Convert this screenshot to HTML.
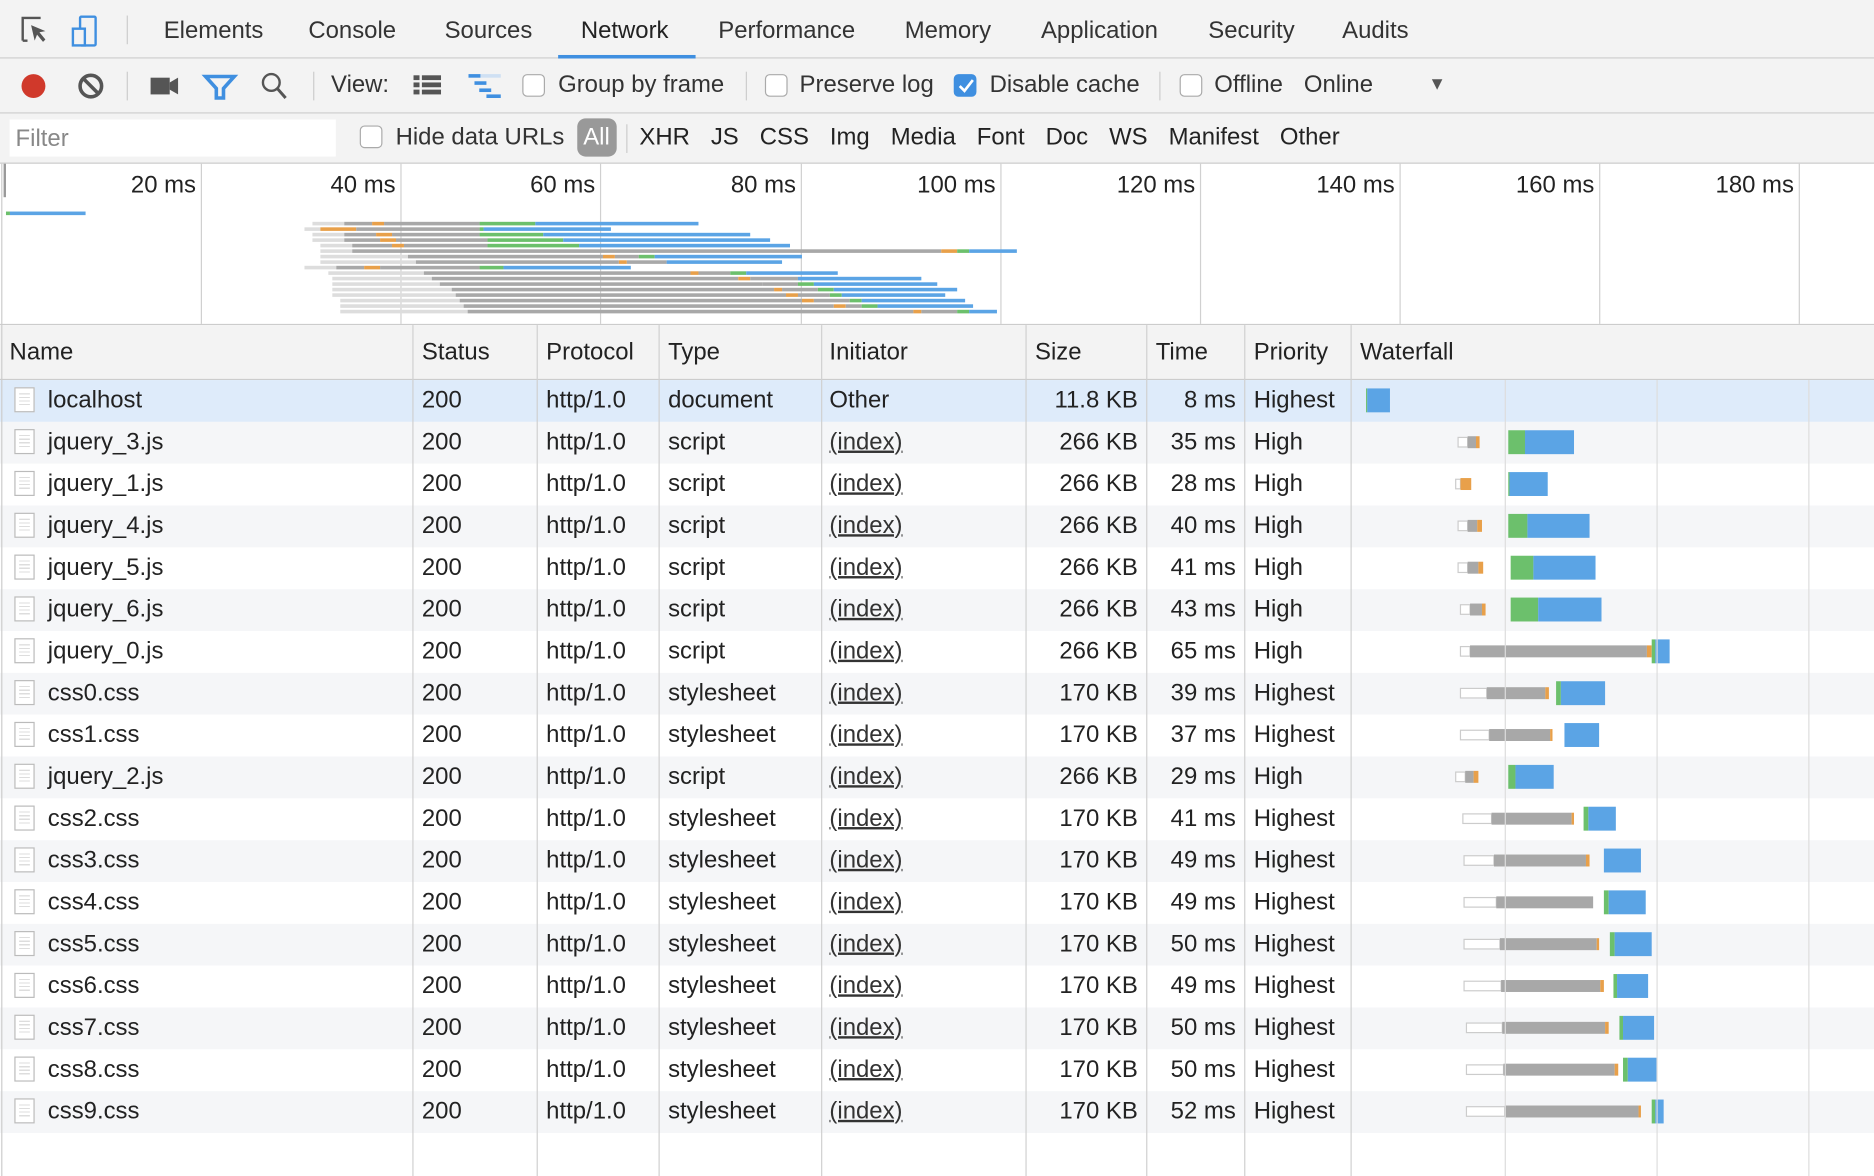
<!DOCTYPE html>
<html><head><meta charset="utf-8"><style>
html,body{margin:0;padding:0;background:#fff;overflow:hidden;width:1874px;height:1176px}
#w{position:absolute;left:0;top:0;width:1568px;height:984px;transform:scale(1.19515);transform-origin:0 0;font-family:"Liberation Sans",Arial,sans-serif;font-size:20px;color:#222}
.a{position:absolute;white-space:nowrap}
.bar{position:absolute;left:0;width:1568px}
.t{top:15px;color:#333}
.cb{position:absolute;width:17px;height:17px;border:1px solid #aaa;border-radius:4px;background:#fff}
.vl{position:absolute;width:1px;background:#d0d0d0}
.row{position:absolute;left:0;width:1568px;height:35px}
.row span{position:absolute;top:6px;white-space:nowrap}
.r{text-align:right}
.u{text-decoration:underline;color:#333}
.ic{position:absolute;left:12px;top:6px;width:17px;height:21px;border:1px solid #bbb;background:#fff;box-sizing:border-box}
.ic:after{content:"";position:absolute;left:3px;right:3px;top:4px;height:11px;background:repeating-linear-gradient(#ddd 0 1px,transparent 1px 3px)}
</style></head><body><div id="w">
<!-- tab bar -->
<div class="bar" style="top:0;height:48px;background:#f3f3f3;border-bottom:1px solid #ccc"></div>
<svg class="a" style="left:16px;top:12px" width="80" height="30">
<path d="M3 22V3h15M3 22h4" fill="none" stroke="#555" stroke-width="2"/>
<path d="M10 9l12 5-5 1 5 6-2 2-5-6-2 5z" fill="#555"/>
<rect x="51" y="2" width="13" height="24" rx="1" fill="none" stroke="#3f8fe0" stroke-width="2"/>
<rect x="45" y="12" width="10" height="14" fill="#f3f3f3" stroke="#3f8fe0" stroke-width="2"/>
</svg>
<div class="a" style="left:106px;top:13px;width:1px;height:24px;background:#ccc"></div>
<div class="a t" style="left:137px">Elements</div>
<div class="a t" style="left:258px">Console</div>
<div class="a t" style="left:372px">Sources</div>
<div class="a t" style="left:486px;color:#222">Network</div>
<div class="a" style="left:467px;top:46px;width:115px;height:3px;background:#3f8fe0"></div>
<div class="a t" style="left:601px">Performance</div>
<div class="a t" style="left:757px">Memory</div>
<div class="a t" style="left:871px">Application</div>
<div class="a t" style="left:1011px">Security</div>
<div class="a t" style="left:1123px">Audits</div>
<!-- toolbar -->
<div class="bar" style="top:49px;height:45px;background:#f3f3f3;border-bottom:1px solid #ccc"></div>
<svg class="a" style="left:14px;top:58px" width="240" height="28">
<circle cx="14" cy="14" r="10" fill="#d0392b"/>
<circle cx="62" cy="14" r="9" fill="none" stroke="#555" stroke-width="3"/><path d="M56 8l12 12" stroke="#555" stroke-width="3"/>
<rect x="112" y="7" width="16" height="14" fill="#555"/><path d="M128 11l7-4v14l-7-4z" fill="#555"/>
<path d="M158 6h24l-9 10v8h-6v-8z" fill="none" stroke="#3f8fe0" stroke-width="3"/>
<circle cx="213" cy="11" r="7" fill="none" stroke="#555" stroke-width="2"/><path d="M218 16l7 8" stroke="#555" stroke-width="2.5"/>
</svg>
<div class="a" style="left:106px;top:60px;width:1px;height:24px;background:#ccc"></div>
<div class="a" style="left:262px;top:60px;width:1px;height:24px;background:#ccc"></div>
<div class="a t" style="left:277px;top:60px">View:</div>
<svg class="a" style="left:345px;top:60px" width="80" height="24">
<rect x="1" y="3" width="5" height="4" fill="#555"/><rect x="8" y="3" width="16" height="4" fill="#555"/>
<rect x="1" y="9" width="5" height="4" fill="#555"/><rect x="8" y="9" width="16" height="4" fill="#555"/>
<rect x="1" y="15" width="5" height="4" fill="#555"/><rect x="8" y="15" width="16" height="4" fill="#555"/>
<rect x="47" y="2" width="10" height="3" fill="#3f8fe0"/><rect x="57" y="2" width="17" height="3" fill="#cfe0f3"/>
<rect x="52" y="8" width="10" height="3" fill="#3f8fe0"/><rect x="56" y="14" width="10" height="3" fill="#3f8fe0"/><rect x="62" y="19" width="12" height="3" fill="#3f8fe0"/>
</svg>
<div class="cb" style="left:437px;top:62px"></div>
<div class="a t" style="left:467px;top:60px">Group by frame</div>
<div class="a" style="left:624px;top:60px;width:1px;height:24px;background:#ccc"></div>
<div class="cb" style="left:640px;top:62px"></div>
<div class="a t" style="left:669px;top:60px">Preserve log</div>
<div class="cb" style="left:798px;top:62px;background:#3f8fe0;border-color:#3f8fe0"></div>
<svg class="a" style="left:800px;top:64px" width="16" height="16"><path d="M3 8l4 4 7-9" fill="none" stroke="#fff" stroke-width="2.2"/></svg>
<div class="a t" style="left:828px;top:60px">Disable cache</div>
<div class="a" style="left:970px;top:60px;width:1px;height:24px;background:#ccc"></div>
<div class="cb" style="left:987px;top:62px"></div>
<div class="a t" style="left:1016px;top:60px">Offline</div>
<div class="a t" style="left:1091px;top:60px">Online</div>
<div class="a" style="left:1195px;top:62px;font-size:15px;color:#555">▼</div>
<!-- filter -->
<div class="bar" style="top:95px;height:41px;background:#f3f3f3;border-bottom:1px solid #ccc"></div>
<div class="a" style="left:8px;top:100px;width:273px;height:31px;background:#fff"></div>
<div class="a" style="left:13px;top:105px;color:#888">Filter</div>
<div class="cb" style="left:301px;top:105px"></div>
<div class="a t" style="left:331px;top:104px">Hide data URLs</div>
<div class="a" style="left:483px;top:99px;width:33px;height:32px;background:#999;border-radius:7px"></div>
<div class="a" style="left:488px;top:104px;color:#fff">All</div>
<div class="a" style="left:524px;top:104px;width:1px;height:24px;background:#ccc"></div>
<div class="a t" style="left:535px;top:104px;word-spacing:12px;color:#222">XHR JS CSS Img Media Font Doc WS Manifest Other</div>
<!-- overview -->
<div class="a" style="left:3px;top:137px;width:2px;height:28px;background:#999"></div>
<div class="vl" style="left:168px;top:137px;height:134px"></div><div class="vl" style="left:335px;top:137px;height:134px"></div><div class="vl" style="left:502px;top:137px;height:134px"></div><div class="vl" style="left:670px;top:137px;height:134px"></div><div class="vl" style="left:837px;top:137px;height:134px"></div><div class="vl" style="left:1004px;top:137px;height:134px"></div><div class="vl" style="left:1171px;top:137px;height:134px"></div><div class="vl" style="left:1338px;top:137px;height:134px"></div><div class="vl" style="left:1505px;top:137px;height:134px"></div>
<div class="a r" style="left:64px;width:100px;top:144px">20 ms</div>
<div class="a r" style="left:231px;width:100px;top:144px">40 ms</div>
<div class="a r" style="left:398px;width:100px;top:144px">60 ms</div>
<div class="a r" style="left:566px;width:100px;top:144px">80 ms</div>
<div class="a r" style="left:733px;width:100px;top:144px">100 ms</div>
<div class="a r" style="left:900px;width:100px;top:144px">120 ms</div>
<div class="a r" style="left:1067px;width:100px;top:144px">140 ms</div>
<div class="a r" style="left:1234px;width:100px;top:144px">160 ms</div>
<div class="a r" style="left:1401px;width:100px;top:144px">180 ms</div>
<div class="bar" style="top:271px;height:1px;background:#ccc"></div>
<!-- header -->
<div class="bar" style="top:272px;height:45px;background:#f3f3f3;border-bottom:1px solid #ccc"></div>
<div class="a" style="left:8px;top:284px">Name</div><div class="a" style="left:353px;top:284px">Status</div><div class="a" style="left:457px;top:284px">Protocol</div><div class="a" style="left:559px;top:284px">Type</div><div class="a" style="left:694px;top:284px">Initiator</div><div class="a" style="left:866px;top:284px">Size</div><div class="a" style="left:967px;top:284px">Time</div><div class="a" style="left:1049px;top:284px">Priority</div><div class="a" style="left:1138px;top:284px">Waterfall</div>
<!-- rows -->
<div id="rows"></div>
<svg class="a" style="left:0;top:0" width="1568" height="984" id="svg"></svg>
</div>
<script>
var d=[["localhost","document","Other","11.8 KB","8 ms","Highest"],["jquery_3.js","script","(index)","266 KB","35 ms","High"],["jquery_1.js","script","(index)","266 KB","28 ms","High"],["jquery_4.js","script","(index)","266 KB","40 ms","High"],["jquery_5.js","script","(index)","266 KB","41 ms","High"],["jquery_6.js","script","(index)","266 KB","43 ms","High"],["jquery_0.js","script","(index)","266 KB","65 ms","High"],["css0.css","stylesheet","(index)","170 KB","39 ms","Highest"],["css1.css","stylesheet","(index)","170 KB","37 ms","Highest"],["jquery_2.js","script","(index)","266 KB","29 ms","High"],["css2.css","stylesheet","(index)","170 KB","41 ms","Highest"],["css3.css","stylesheet","(index)","170 KB","49 ms","Highest"],["css4.css","stylesheet","(index)","170 KB","49 ms","Highest"],["css5.css","stylesheet","(index)","170 KB","50 ms","Highest"],["css6.css","stylesheet","(index)","170 KB","49 ms","Highest"],["css7.css","stylesheet","(index)","170 KB","50 ms","Highest"],["css8.css","stylesheet","(index)","170 KB","50 ms","Highest"],["css9.css","stylesheet","(index)","170 KB","52 ms","Highest"]];
// [white start, gray start, orange start, orange end, green start, blue start, blue end]
var w=[[1143,1143,1143,1143,1143,1144,1163],[1220,1228,1235,1238,1262,1276,1317],[1218,1222,1222,1231,1262,1263,1295],[1220,1228,1236,1240,1262,1278,1330],[1220,1228,1237,1241,1264,1283,1335],[1222,1230,1240,1243,1264,1287,1340],[1222,1230,1378,1382,1382,1385,1397],[1222,1244,1293,1296,1302,1306,1343],[1222,1246,1297,1299,1309,1309,1338],[1218,1226,1233,1237,1262,1268,1300],[1224,1248,1315,1317,1325,1329,1352],[1225,1250,1327,1330,1342,1342,1373],[1225,1252,1333,1333,1342,1346,1377],[1225,1255,1336,1338,1347,1351,1382],[1225,1256,1339,1342,1350,1353,1379],[1227,1257,1343,1346,1355,1358,1384],[1227,1258,1351,1354,1358,1362,1386],[1227,1259,1371,1373,1382,1385,1392]];
var h='',s='';
var cols=[345,449,551,687,858,959,1041,1130];
for(var i=0;i<d.length;i++){var y=318+35*i,r=d[i];
var bg=i==0?'#deebfa':(i%2?'#f5f6f8':'#fff');
h+='<div class="row" style="top:'+y+'px;background:'+bg+'"><div class="ic"></div><span style="left:40px">'+r[0]+'</span><span style="left:353px">200</span><span style="left:457px">http/1.0</span><span style="left:559px">'+r[1]+'</span><span style="left:694px" class="'+(i?'u':'')+'"'+(i?'':' style="left:694px;color:#777"')+'>'+r[2]+'</span><span class="r" style="left:852px;width:100px">'+r[3]+'</span><span class="r" style="left:934px;width:100px">'+r[4]+'</span><span style="left:1049px">'+r[5]+'</span></div>';
var b=w[i],c=y+17;
function R(x1,x2,yy,hh,col,st){if(x2>x1)s+='<rect x="'+x1+'" y="'+yy+'" width="'+(x2-x1)+'" height="'+hh+'" fill="'+col+'"'+(st?' stroke="#ccc" stroke-width="1"':'')+'/>';}
if(i>0){R(b[0],b[1],c-4,8,'#fff',1);R(b[1],b[2],c-5,10,'#a8a8a8');R(b[2],b[3],c-5,10,'#e8a04a');}
R(b[4],b[5],c-10,20,'#6cc06c');R(b[5],b[6],c-10,20,'#5ba4e5');
// overview
var oy=i==0?177:181+i*4.6;
function O(x1,x2,col){if(x2>x1){var a=5+(x1-1143)*3.33,e=5+(x2-1143)*3.33;s+='<rect x="'+a+'" y="'+oy+'" width="'+(e-a)+'" height="3" fill="'+col+'"/>';}}
O(b[0],b[1],'#ddd');O(b[1],b[2],'#a8a8a8');O(b[2],b[3],'#e8a04a');O(b[3],b[4],'#a8a8a8');O(b[4],b[5],'#6cc06c');O(b[5],b[6],'#5ba4e5');
}
document.getElementById('rows').innerHTML=h;
for(var k=0;k<cols.length;k++)s+='<rect x="'+cols[k]+'" y="272" width="1" height="712" fill="#d0d0d0"/>';
[1259,1386,1513].forEach(function(x){s+='<rect x="'+x+'" y="318" width="1" height="666" fill="#ddd"/>';});
s+='<rect x="1" y="137" width="1" height="847" fill="#ccc"/>';
document.getElementById('svg').innerHTML=s;
</script>
</body></html>
